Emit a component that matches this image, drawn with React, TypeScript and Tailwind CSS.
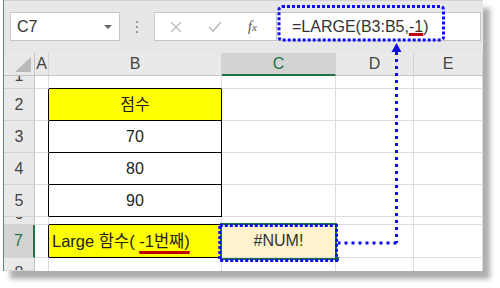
import React from "react";

const FONT = "font-['Liberation_Sans','Noto_Sans_CJK_KR',sans-serif]";

function Cell({ className = "", children }: { className?: string; children?: React.ReactNode }) {
  return (
    <div className={`flex items-center justify-center overflow-hidden border-r border-b border-[#dcdcdc] ${className}`}>
      {children}
    </div>
  );
}

function ColHead({ label, active = false }: { label: string; active?: boolean }) {
  return (
    <div
      className={`flex items-center justify-center border-r border-[#d4d4d4] text-[16px] ${
        active
          ? "bg-[#d3d3d3] text-[#217346] border-b-2 border-b-[#217346]"
          : "bg-[#e9e9e9] text-[#444] border-b border-b-[#c4c4c4]"
      }`}
    >
      {label}
    </div>
  );
}

function RowHead({ children, active = false, className = "" }: { children?: React.ReactNode; active?: boolean; className?: string }) {
  return (
    <div
      className={`flex justify-center overflow-hidden border-b border-[#d4d4d4] text-[16px] leading-[16px] ${
        active
          ? "bg-[#d3d3d3] text-[#217346] border-r-2 border-r-[#217346]"
          : "bg-[#e9e9e9] text-[#444] border-r border-r-[#c4c4c4]"
      } ${className}`}
    >
      {children}
    </div>
  );
}

export default function App() {
  return (
    <div className={`relative w-[500px] h-[288px] bg-white overflow-hidden ${FONT}`}>
      {/* window */}
      <div className="ml-[3px] w-[480px] h-[271px] flex flex-col bg-white border-l border-[#5f8a6e] shadow-[7px_8px_5px_rgba(0,0,0,0.32)]">
        {/* formula bar */}
        <div className="h-[53px] flex items-start pt-[11px] bg-[#e7e7e7] border-t border-[#d2d2d2]">
          <div className="ml-[6px] w-[110px] h-[29px] flex items-center justify-between bg-white border border-[#c6c6c6] pl-[6px] pr-[7px]">
            <span className="text-[16px] text-[#333]">C7</span>
            <span className="w-0 h-0 border-l-[4px] border-r-[4px] border-t-[4px] border-l-transparent border-r-transparent border-t-[#666]" />
          </div>
          <div className="w-[34px] h-[29px] flex flex-col items-center justify-center gap-[3px]">
            <span className="w-[2px] h-[2px] bg-[#9a9a9a]" />
            <span className="w-[2px] h-[2px] bg-[#9a9a9a]" />
            <span className="w-[2px] h-[2px] bg-[#9a9a9a]" />
          </div>
          <div className="w-[123px] h-[29px] flex items-center bg-white border border-[#c6c6c6]">
            <svg width="12" height="12" viewBox="0 0 12 12" className="ml-[15px]">
              <path d="M1 1 L11 11 M11 1 L1 11" stroke="#bdbdbd" strokeWidth="1.4" />
            </svg>
            <svg width="14" height="12" viewBox="0 0 14 12" className="ml-[26px]">
              <path d="M1 6 L5 10 L13 1" stroke="#bdbdbd" strokeWidth="1.6" fill="none" />
            </svg>
            <span className="ml-[26px] text-[14px] italic font-['Liberation_Serif',serif] text-[#555]">
              f<span className="text-[11px]">x</span>
            </span>
          </div>
          <div className="flex-1 mr-[2px] h-[29px] flex items-center bg-white border border-l-0 border-[#c6c6c6] pl-[15px] text-[16px] text-[#333]">
            =LARGE(B3:B5,
            <span className="underline decoration-[#c00000] decoration-[3px] underline-offset-[1px]">-1</span>)
          </div>
        </div>

        {/* sheet grid */}
        <div className="grid grid-cols-[31px_14px_173px_114px_78px_69px] grid-rows-[23px_13px_32px_32px_32px_32px_8px_33px_13px] text-[#222]">
          {/* header row */}
          <div className="flex items-end justify-end pr-[3px] pb-[3px] bg-[#e9e9e9] border-r border-b border-[#c4c4c4]">
            <svg width="16" height="15" viewBox="0 0 16 15">
              <polygon points="16,0 16,15 0,15" fill="#b9b9b9" />
            </svg>
          </div>
          <ColHead label="A" />
          <ColHead label="B" />
          <ColHead label="C" active />
          <ColHead label="D" />
          <ColHead label="E" />

          {/* row 1 */}
          <RowHead className="items-start">
            <span className="-mt-[8px]">1</span>
          </RowHead>
          <Cell />
          <Cell className="border-b-black" />
          <Cell />
          <Cell />
          <Cell />

          {/* row 2 */}
          <RowHead className="items-center">2</RowHead>
          <Cell className="border-r-black" />
          <Cell className="bg-[#ffff00] border-r-black border-b-black text-[16px]">점수</Cell>
          <Cell />
          <Cell />
          <Cell />

          {/* row 3 */}
          <RowHead className="items-center">3</RowHead>
          <Cell className="border-r-black" />
          <Cell className="border-r-black border-b-black text-[16px]">70</Cell>
          <Cell />
          <Cell />
          <Cell />

          {/* row 4 */}
          <RowHead className="items-center">4</RowHead>
          <Cell className="border-r-black" />
          <Cell className="border-r-black border-b-black text-[16px]">80</Cell>
          <Cell />
          <Cell />
          <Cell />

          {/* row 5 */}
          <RowHead className="items-center">5</RowHead>
          <Cell className="border-r-black" />
          <Cell className="border-r-black border-b-black text-[16px]">90</Cell>
          <Cell />
          <Cell />
          <Cell />

          {/* row 6 (squeezed) */}
          <RowHead className="items-start">
            <span className="-mt-[11px]">6</span>
          </RowHead>
          <Cell />
          <Cell className="border-b-black" />
          <Cell />
          <Cell />
          <Cell />

          {/* row 7 */}
          <RowHead active className="items-center">7</RowHead>
          <Cell className="border-r-black" />
          <Cell className="bg-[#ffff00] border-r-black border-b-black justify-start pl-[3px] text-[16.5px] whitespace-nowrap">
            Large 함수(&nbsp;
            <span className="underline decoration-[#c00000] decoration-[3px] underline-offset-[4px]">-1번째)</span>
          </Cell>
          <Cell className="bg-[#fff2cc] text-[16px] text-[#333]">#NUM!</Cell>
          <Cell />
          <Cell />

          {/* row 8 */}
          <RowHead className="items-start">
            <span className="mt-[7px]">8</span>
          </RowHead>
          <Cell className="border-b-0" />
          <Cell className="border-b-0" />
          <Cell className="border-b-0" />
          <Cell className="border-b-0" />
          <Cell className="border-b-0" />
        </div>
      </div>

      {/* annotation overlay */}
      <svg className="absolute inset-0 pointer-events-none" width="500" height="288" viewBox="0 0 500 288">
        <rect x="279" y="6.5" width="164.5" height="33.5" rx="3" fill="none" stroke="#0b0bf5" strokeWidth="3" strokeDasharray="3 2" />
        <polygon points="396.5,43 391.5,52 401.5,52" fill="#0b0bf5" />
        <line x1="396.5" y1="52" x2="396.5" y2="243" stroke="#0b0bf5" strokeWidth="3" strokeDasharray="3 4" />
        <line x1="396.5" y1="243" x2="338" y2="243" stroke="#0b0bf5" strokeWidth="3" strokeDasharray="3 4" />
        <rect x="221" y="224" width="115" height="35" fill="none" stroke="#217346" strokeWidth="2" />
        <rect x="335" y="257" width="4" height="4" fill="#217346" />
        <rect x="219.8" y="225.5" width="116.7" height="35" fill="none" stroke="#0b0bf5" strokeWidth="3" strokeDasharray="3 2" />
      </svg>
    </div>
  );
}
